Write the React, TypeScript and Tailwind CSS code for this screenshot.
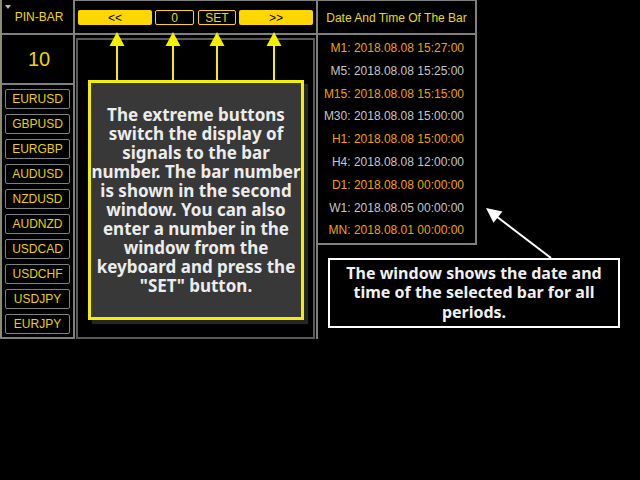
import React from "react";

const pairs = ["EURUSD", "GBPUSD", "EURGBP", "AUDUSD", "NZDUSD", "AUDNZD", "USDCAD", "USDCHF", "USDJPY", "EURJPY"];

const rows: { p: string; t: string; orange: boolean }[] = [
  { p: "M1", t: "2018.08.08 15:27:00", orange: true },
  { p: "M5", t: "2018.08.08 15:25:00", orange: false },
  { p: "M15", t: "2018.08.08 15:15:00", orange: true },
  { p: "M30", t: "2018.08.08 15:00:00", orange: false },
  { p: "H1", t: "2018.08.08 15:00:00", orange: true },
  { p: "H4", t: "2018.08.08 12:00:00", orange: false },
  { p: "D1", t: "2018.08.08 00:00:00", orange: true },
  { p: "W1", t: "2018.08.05 00:00:00", orange: false },
  { p: "MN", t: "2018.08.01 00:00:00", orange: true },
];

const calloutLines = [
  "The extreme buttons",
  "switch the display of",
  "signals to the bar",
  "number. The bar number",
  "is shown in the second",
  "window. You can also",
  "enter a number in the",
  "window from the",
  "keyboard and press the",
  "\"SET\" button.",
];

const noteLines = ["The window shows the date and", "time of the selected bar for all", "periods."];

function YellowArrow({ x }: { x: number }) {
  return (
    <g>
      <line x1={x} y1={45} x2={x} y2={81} stroke="#f5ee00" strokeWidth={2} />
      <polygon points={`${x - 7.5},46 ${x + 7.5},46 ${x},32`} fill="#f5ee00" />
    </g>
  );
}

export default function App() {
  return (
    <div className="relative w-[640px] h-[480px] bg-black overflow-hidden font-['Liberation_Sans',Arial,sans-serif] text-[12px]">
      <div className="flex items-start">
        {/* Left column */}
        <div className="w-[75px] h-[339px] flex flex-col border-l-2 border-r-2 border-b-2 border-[#808080] border-l-[#8c8c74]">
          <div className="relative h-[35px] border-b-2 border-[#808080] flex items-center justify-center pl-[3px] text-[#f0d800]">
            <svg className="absolute left-[3px] top-[5px]" width="6" height="4" viewBox="0 0 6 4">
              <polygon points="0,0 6,0 3,4" fill="#c9b58c" />
            </svg>
            <span>PIN-BAR</span>
          </div>
          <div className="h-[50px] border-b-2 border-[#808080] flex items-center justify-center pl-[3px] text-[20px] text-[#f2d400]">
            10
          </div>
          <div className="flex flex-col gap-[5px] pt-[4px] px-[3px]">
            {pairs.map((p) => (
              <div
                key={p}
                className="h-[20px] border border-[#808080] rounded-[2px] flex items-center justify-center text-[#ecd000]"
              >
                {p}
              </div>
            ))}
          </div>
        </div>

        {/* Middle column */}
        <div className="w-[243px] h-[339px] flex flex-col border-r-2 border-[#808080]">
          <div className="h-[35px] border-t border-b-2 border-[#808080] flex items-start pt-[9px] pl-[3px]">
            <div className="w-[74px] h-[15px] bg-[#ffd700] rounded-[2px] flex items-center justify-center text-black">
              &lt;&lt;
            </div>
            <div className="ml-[3px] w-[39px] h-[15px] border border-[#ffd700] rounded-[2px] flex items-center justify-center text-[#f0d800]">
              0
            </div>
            <div className="ml-[4px] w-[38px] h-[15px] border border-[#ffd700] rounded-[2px] flex items-center justify-center text-[#f0d800]">
              SET
            </div>
            <div className="ml-[3px] w-[74px] h-[15px] bg-[#ffd700] rounded-[2px] flex items-center justify-center text-black">
              &gt;&gt;
            </div>
          </div>
          <div className="mx-[1px] mt-[3px] flex-1 border-2 border-[#5a5a5a] pl-[10px] pt-[40px]">
            <div className="w-[216px] h-[240px] border-[3px] border-[#f5ee00] bg-[#383838] shadow-[4px_4px_1px_#262626] flex flex-col items-center justify-center font-['Noto_Sans',sans-serif] font-bold text-[17px] leading-[19px] text-[#ececec]">
              {calloutLines.map((l, i) => (
                <div key={i} className="whitespace-nowrap">
                  {l}
                </div>
              ))}
            </div>
          </div>
        </div>

        {/* Right column */}
        <div className="w-[159px] h-[245px] flex flex-col border-t border-r-2 border-b-2 border-[#808080]">
          <div className="h-[34px] border-b-2 border-[#808080] flex items-center justify-center pt-[2px] text-[#ecdc00]">
            Date And Time Of The Bar
          </div>
          <div className="flex flex-col items-end pt-[2px] pr-[11px]">
            {rows.map((r) => (
              <div
                key={r.p}
                className={`h-[22.8px] leading-[22.8px] whitespace-nowrap ${r.orange ? "text-[#f2a200]" : "text-[#c6c6c6]"}`}
              >
                {r.p}: {r.t}
              </div>
            ))}
          </div>
        </div>
      </div>

      {/* Annotation arrows */}
      <svg className="absolute left-0 top-0 pointer-events-none" width="640" height="480" viewBox="0 0 640 480">
        <YellowArrow x={117} />
        <YellowArrow x={173} />
        <YellowArrow x={217} />
        <YellowArrow x={274} />
        <line x1={551} y1={258} x2={496} y2={216} stroke="#ffffff" strokeWidth={2} />
        <polygon points="486,208 502.5,211.5 493.5,222.8" fill="#ffffff" />
      </svg>

      {/* Annotation note */}
      <div className="absolute left-[328px] top-[258px] w-[292px] h-[70px] border-2 border-white bg-black flex flex-col items-center justify-center font-['Noto_Sans',sans-serif] font-bold text-[16px] leading-[19.5px] text-[#f0f0f0]">
        {noteLines.map((l, i) => (
          <div key={i} className="whitespace-nowrap">
            {l}
          </div>
        ))}
      </div>
    </div>
  );
}
